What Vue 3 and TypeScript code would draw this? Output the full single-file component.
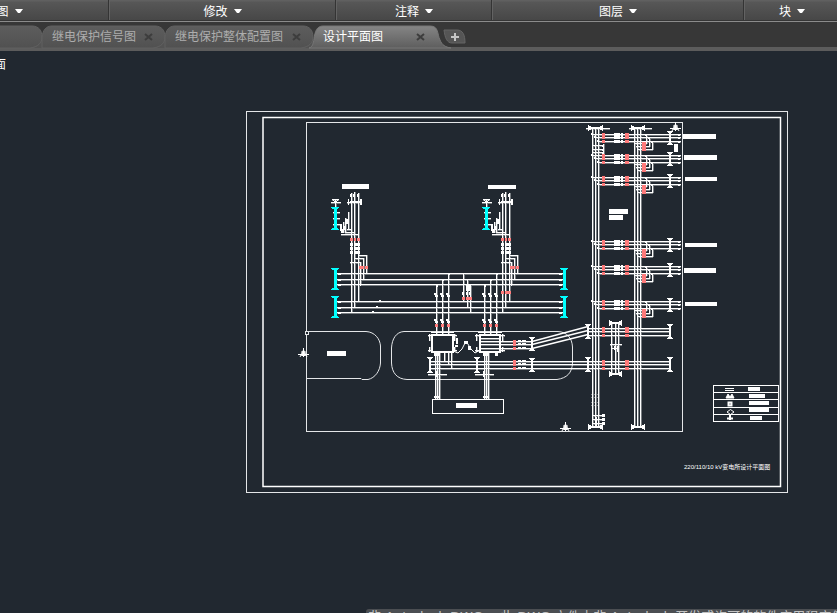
<script setup lang="ts">
import { ref } from 'vue'

interface Panel { name: string; width: number }
interface Tab { id: number; name: string; width: number }

const panels: Panel[] = [
  { name: '绘图', width: 211 },
  { name: '修改', width: 227 },
  { name: '注释', width: 156 },
  { name: '图层', width: 252 },
  { name: '块', width: 96 },
]

const tabs: Tab[] = [
  { id: 0, name: '', width: 124 },
  { id: 1, name: '继电保护信号图', width: 123 },
  { id: 2, name: '继电保护整体配置图', width: 148 },
  { id: 3, name: '设计平面图', width: 124 },
]
const active = ref(3)

function tabShape(t: Tab): string {
  const w = t.width
  return t.id === active.value
    ? `M-4 23C0 22 0 18 1 14C2 6 4 1 10 1H${w - 7}C${w + 2} 1 ${w} 9 ${w + 3} 15C${w + 5} 20 ${w + 8} 22 ${w + 14} 23Z`
    : `M0 23V12C1 5 4 1 10 1H${w - 10}C${w - 3} 1 ${w} 6 ${w} 12C${w} 18 ${w - 4} 22 ${w - 12} 23Z`
}

/* Drawing primitives: every stroke is collected as a filled pixel-wide box. */
let white = ''
let cyan = ''
let red = ''
let soft = ''
const box = (x: number, y: number, w: number, h: number) => `M${x} ${y}h${w}v${h}h${-w}z`
const fill = (x: number, y: number, w: number, h: number) => { white += box(x, y, w, h) }
const hl = (x1: number, x2: number, y: number) => {
  fill(x1, y, x2 - x1, 1)
  soft += box(x1, y + 1, x2 - x1, 1)
}
const vl = (x: number, y1: number, y2: number) => {
  fill(x, y1, 1, y2 - y1)
  soft += box(x + 1, y1, 1, y2 - y1)
}
const mark = (x: number, y: number, w = 3, h = 3) => { red += box(x, y, w, h) }
const dot = (x: number, y: number) => fill(x, y, 2, 2)

function post(x: number, y1: number, y2: number) {
  fill(x - 1, y1, 2, y2 - y1)
  fill(x - 3, y1, 6, 1)
  fill(x - 3, y2 - 1, 6, 1)
  fill(x - 2, y1 + 1, 4, 1)
  fill(x - 2, y2 - 2, 4, 1)
}
function gantry(x1: number, x2: number, y: number) {
  fill(x1, y - 1, x2 - x1, 2)
  fill(x1, y - 3, 1, 6)
  fill(x2 - 1, y - 3, 1, 6)
  fill(x1 + 1, y - 2, 2, 4)
  fill(x2 - 3, y - 2, 2, 4)
}
function cyanPost(x: number, y1: number, y2: number, half: number) {
  cyan += box(x - 1, y1, 3, y2 - y1)
  cyan += box(x - half, y1, half * 2, 1) + box(x - half + 1, y1 + 1, half * 2 - 2, 1)
  cyan += box(x - half, y2 - 1, half * 2, 1) + box(x - half + 1, y2 - 2, half * 2 - 2, 1)
}

/* 110 kV incoming feeders */
for (const d of [0, 151]) {
  vl(351 + d, 193, 313)
  vl(354 + d, 192, 308)
  vl(358 + d, 193, 302)
  for (const x of [351, 354, 358]) fill(x + d - 1, 194, 2, 3)
  hl(347 + d, 362 + d, 202)
  fill(348 + d, 199, 1, 6)
  fill(360 + d, 199, 2, 6)
  fill(350 + d, 201, 10, 2)
  hl(331 + d, 341 + d, 202)
  hl(332 + d, 339 + d, 199)
  for (const [x, y] of [[333, 200], [337, 200], [334, 201], [336, 201]]) fill(x + d, y, 1, 1)
  vl(335 + d, 199, 228)
  cyanPost(335 + d, 207, 230, 4)
  for (const y of [212, 218, 224]) hl(333 + d, 340 + d, y)
  vl(348 + d, 212, 229)
  fill(345 + d, 219, 4, 5)
  vl(343 + d, 222, 233)
  vl(345 + d, 218, 233)
  fill(340 + d, 224, 2, 7)
  fill(341 + d, 229, 3, 4)
  fill(343 + d, 226, 3, 4)
  hl(341 + d, 358 + d, 234)
  hl(345 + d, 355 + d, 232)
  hl(347 + d, 352 + d, 229)
  for (const x of [350, 354, 357]) {
    mark(x + d, 238, x === 354 ? 2 : 3)
    for (const y of [243, 247, 251]) fill(x + d, y, 3, 3)
  }
  hl(358 + d, 367 + d, 255)
  vl(366 + d, 255, 274)
  hl(354 + d, 364 + d, 258)
  vl(363 + d, 258, 280)
  hl(350 + d, 361 + d, 262)
  vl(360 + d, 262, 286)
  for (const x of [359, 362, 365]) mark(x + d, 266, x === 362 ? 2 : 3)
}
for (const x of [501, 505, 508]) mark(x, 291)

/* Main busbars */
for (const y of [273, 279, 284, 301, 307, 312]) hl(337, 564, y)
for (const x of [335, 564]) {
  cyanPost(x, 268, 290, 4)
  cyanPost(x, 296, 318, 4)
}
dot(379, 300); dot(376, 306); dot(372, 311)
for (const y of [273, 279, 284, 301, 307, 312]) { fill(338, y, 3, 2); fill(559, y, 3, 2) }

/* Transformer connections */
for (const g of [436, 484]) {
  const top = [285, 279, 273]
  top.forEach((t, i) => {
    const x = g + i * 6
    vl(x, t, 334)
    dot(x, t)
    fill(x - 2, 293, 2, 2)
    fill(x - 1, 295, 3, 2)
    fill(x - 2, 319, 2, 2)
    fill(x - 1, 321, 3, 2)
    mark(x - 1, 324)
  })
}
vl(463, 273, 302); vl(467, 279, 308); vl(470, 285, 313)
for (const x of [462, 466, 469]) { mark(x, 297); fill(x, 292, 2, 3) }
fill(466, 285, 5, 6)

/* Vertical busbars of the 10 kV yard */
for (const x of [592, 595, 598, 634, 637, 640]) vl(x, 129, 427)
gantry(588, 603, 128); gantry(631, 645, 128)
hl(586, 610, 128); hl(629, 652, 128)
gantry(588, 603, 427); gantry(631, 645, 427)

/* Outgoing bays */
for (const y of [134, 155, 177, 241, 266, 301]) {
  ;[0, 3, 7].forEach((o, i) => {
    hl(592 + i * 3, 681, y + o)
    fill(591 + i * 3, y + o - 1, 2, 2)
    mark(602, y + o - 1)
    fill(614, y + o - 1, 6, 3)
    fill(621, y + o - 1, 2, 3)
    mark(625, y + o - 1, 4)
    fill(678, y + o, 2, 2)
    mark(642, y + 8 + i * 3, 4, 3)
    const yy = y + 9 + i * 3
    hl(635 + i, 642, yy)
    hl(646, 647 + i * 3, yy)
    vl(646 + i * 3, y + o, yy + 1)
    dot(645 + i * 3, y + o)
  })
  post(670, y - 3, y + 11)
}
for (const y of [145, 149, 152]) { hl(592, 603, y); dot(602, y) }
vl(603, 144, 155)

/* Section couplers */
for (const y of [328, 361]) {
  for (const o of [0, 3, 7]) {
    hl(y === 328 ? 587 : 430, 671, y + o)
    mark(602, y + o - 1)
    mark(625, y + o - 1, 4)
  }
  post(588, y - 4, y + 11)
  post(670, y - 4, y + 11)
}
for (const x of [611, 615, 618]) vl(x, 323, 374)
gantry(609, 622, 323)
gantry(609, 622, 374)
hl(610, 622, 344)
fill(614, 346, 2, 4); fill(617, 346, 2, 6); fill(612, 348, 5, 1)
for (const y of [394, 397, 402, 405]) soft += box(591, y, 9, 1)
for (const y of [415, 419, 423]) { hl(592, 602, y); fill(602, y - 1, 3, 3) }
fill(596, 417, 1, 9)

/* Transformers and the building */
for (const x of [430, 477]) {
  post(x, 357, 373)
  hl(x - 2, x + 17, 374)
  vl(x + 6, 371, 377)
}
for (const y of [341, 344, 348]) hl(481, 532, y)
hl(481, 499, 338)
for (const y of [341, 344, 348, 361, 364, 368]) {
  mark(513, y - 1)
  fill(518, y - 1, 3, 2)
  fill(522, y - 1, 4, 2)
}
post(532, 337, 351)
post(532, 358, 372)
for (const x of [435, 437, 439, 484, 486, 488]) vl(x, 352, 399)
vl(444, 352, 362); vl(448, 352, 365); vl(451, 352, 368)
for (const x of [434, 483]) { fill(x, 353, 6, 3); fill(x, 396, 6, 2) }
for (const x of [429, 454, 476, 502]) { vl(x, 334, 341); vl(x, 347, 352); hl(x - 1, x + 3, 335); hl(x - 1, x + 3, 350) }
fill(456, 338, 2, 6); fill(455, 345, 3, 2)
fill(464, 341, 4, 3); fill(468, 346, 3, 4)
fill(495, 353, 3, 3)

/* Label plates */
const plates: number[][] = [
  [342, 184, 27, 5], [488, 185, 28, 4], [683, 134, 33, 5], [684, 155, 33, 5],
  [685, 177, 32, 4], [685, 243, 32, 4], [684, 268, 32, 5], [685, 302, 32, 4],
  [674, 144, 4, 8], [609, 209, 19, 5], [609, 215, 14, 5], [327, 351, 19, 5],
  [456, 403, 21, 5], [748, 387, 12, 4], [749, 394, 16, 4], [749, 401, 20, 4],
  [749, 408, 20, 4], [750, 416, 12, 4],
]
for (const [x, y, w, h] of plates) fill(x, y, w, h)

/* Legend rules */
for (const y of [385, 392, 399, 407, 414, 421]) fill(713, y, 66, 1)
fill(713, 385, 1, 37)
fill(778, 385, 1, 37)

const stars = [[303, 353], [565, 427], [675, 127]]
</script>

<template>
  <div class="app">
    <nav class="ribbon" aria-label="功能区">
      <button v-for="p in panels" :key="p.name" class="panel" type="button" :style="{ flexBasis: p.width + 'px' }">
        <span>{{ p.name }}</span>
        <svg class="caret" width="8" height="5" viewBox="0 0 8 5"><path d="M0 0H8L5 4H3Z" fill="#fff" /></svg>
      </button>
      <span class="rest"></span>
    </nav>

    <div class="tabs">
      <div v-for="t in tabs" :key="t.id" class="tab" :class="{ active: t.id === active }" :style="{ flexBasis: t.width + 'px' }">
        <svg class="shape" :width="t.width" height="23">
          <defs>
            <linearGradient :id="'g' + t.id" x1="0" y1="0" x2="0" y2="1">
              <stop offset="0" :stop-color="t.id === active ? '#858585' : '#5d5d5d'" />
              <stop offset="1" :stop-color="t.id === active ? '#5e5e5e' : '#515151'" />
            </linearGradient>
          </defs>
          <rect v-if="t.id !== active" x="0" y="12" :width="t.width" height="11" fill="#535353" />
          <path :d="tabShape(t)" :fill="`url(#g${t.id})`" :stroke="t.id === active ? '#777' : '#616161'" />
        </svg>
        <template v-if="t.name">
          <button class="name" type="button" @click="active = t.id">{{ t.name }}</button>
          <button class="close" type="button" aria-label="关闭">
            <svg width="9" height="8" viewBox="0 0 9 8"><path d="M1 1L8 7M8 1L1 7" stroke="#3d3d3d" stroke-width="2" /></svg>
          </button>
        </template>
      </div>
      <button class="add" type="button" aria-label="新建">
        <svg width="24" height="15" viewBox="0 0 24 15">
          <path d="M1 1H14C20 1 22 6 22 14H9C4 14 2 9 1 1Z" fill="#555" stroke="#656565" />
          <path d="M8 8H16M12 4V12" stroke="#c4c4c4" stroke-width="2" />
        </svg>
      </button>
    </div>

    <main class="model">
      <div class="view">平面</div>
      <svg class="drawing" width="544" height="384" viewBox="245 110 544 384" role="img" aria-label="变电所设计平面图">
        <g fill="none" stroke="#e4e6e8">
          <rect x="246.5" y="111.5" width="541" height="381" />
          <rect x="306.5" y="122.5" width="376" height="309" />
          <path d="M307 331.500H366C375 332 380 339 380.500 346V363C380 371 375 378 368 379.500H362L361 378.500H307" />
          <path d="M404 331.500H558C567 332 572 338 572.500 347V363C572 373 567 378 557 379.500H407C397 379 392 373 391.500 363V348C392 339 396 332 404 331.500Z" />
          <rect x="432.500" y="399.500" width="71" height="14" stroke="#fff" />
          <rect x="305.500" y="331.500" width="3" height="3" fill="#212830" />
        </g>
        <path d="M263 117.500H780.500V486.500H263Z" fill="none" stroke="#fff" stroke-width="1.500" />
        <g fill="none" stroke="#fff">
          <rect x="432" y="335" width="21" height="17" stroke-width="2" />
          <path d="M431 332.500H454M478 332.500H502" />
          <rect x="480" y="335" width="20" height="17" stroke-width="2" />
          <path d="M453 351L458 353L462 349L466 341L471 349L475 353L480 350" />
          <path d="M532 341.500L588 326.500M532 344.500L588 330.500M532 348.500L588 334.500" stroke-width="1.300" />
        </g>
        <path :d="soft" fill="#fff" fill-opacity=".4" />
        <path :d="white" fill="#fff" />
        <path :d="cyan" fill="#00ffff" />
        <path :d="red" fill="#ff7b7b" />
        <g v-for="(s, i) in stars" :key="i" :transform="`translate(${s[0]} ${s[1]})`" fill="none" stroke="#fff">
          <path d="M.5 -5V4M-5 1.500H6M-3 4L.5 -3L4 4M-2 -1H3" />
          <path d="M-2 3L.5 -3L3 3Z" fill="#fff" stroke="none" />
        </g>
        <g fill="none" stroke="#fff">
          <path d="M725 388.500H734M725 390.500H734" />
          <path d="M726 398L728 394L730 397L732 394L734 398Z" fill="#fff" />
          <rect x="728.500" y="402.500" width="3" height="3" stroke-width="2" />
          <path d="M727 412L730.500 409.500L734 412L730.500 414.500Z" />
          <path d="M730 415V420M727 418.500H733" stroke-width="2" />
        </g>
        <text class="title" x="684" y="469">220/110/10 kV变电所设计平面图</text>
      </svg>
    </main>

    <footer class="command">非 Autodesk DWG。&nbsp;此 DWG 文件由非 Autodesk 开发或许可的软件应用程序保存。</footer>
  </div>
</template>

<style>
body { margin: 0; background: #212830; }
</style>

<style scoped>
.app {
  display: flex;
  flex-direction: column;
  height: 100vh;
  overflow: hidden;
  background: #212830;
  color: #fff;
  font: 12px/16px "Liberation Sans", "Noto Sans CJK SC", sans-serif;
}
button { padding: 0; border: 0; background: none; color: inherit; font: inherit; }
.ribbon {
  display: flex;
  flex: none;
  height: 20px;
  margin-left: -102px;
  border-bottom: 1px solid #353535;
  background: linear-gradient(#606060 0 1px, #575757 2px, #474747);
}
.panel {
  box-sizing: border-box;
  display: flex;
  flex: none;
  align-items: center;
  justify-content: center;
  gap: 6px;
  padding-top: 3px;
  border-right: 1px solid #343434;
  border-left: 1px solid #636363;
}
.rest { flex: 1; }
.caret { display: block; }
.tabs {
  display: flex;
  flex: none;
  height: 25px;
  margin-left: -82px;
  border-top: 1px solid #8b8b8b;
  border-bottom: 4px solid #5c5c5c;
  background: #373737;
}
.tab {
  position: relative;
  display: flex;
  flex: none;
  align-items: center;
  justify-content: space-between;
  box-sizing: border-box;
  height: 23px;
  margin-top: 3px;
  padding: 0 12px 0 10px;
  color: #adadad;
}
.tab.active { z-index: 1; color: #fff; }
.shape { position: absolute; top: 0; left: 0; overflow: visible; }
.name, .close { position: relative; }
.close { display: flex; }
.add { display: flex; align-self: flex-start; margin: 7px 0 0 6px; }
.model { flex: 1; min-height: 0; overflow: hidden; }
.view { margin: 6px 0 0 -18px; }
.drawing {
  display: block;
  margin: 37px 0 0 245px;
}
.title { fill: #fff; font-size: 6px; }
.command {
  flex: none;
  height: 4px;
  margin-left: 366px;
  padding-left: 2px;
  overflow: hidden;
  border-radius: 3px 0 0 0;
  background: #4b4e52;
  color: #c4c4c4;
  font-family: "DejaVu Sans", "Noto Sans CJK SC", sans-serif;
  font-size: 13px;
  white-space: nowrap;
}
</style>
